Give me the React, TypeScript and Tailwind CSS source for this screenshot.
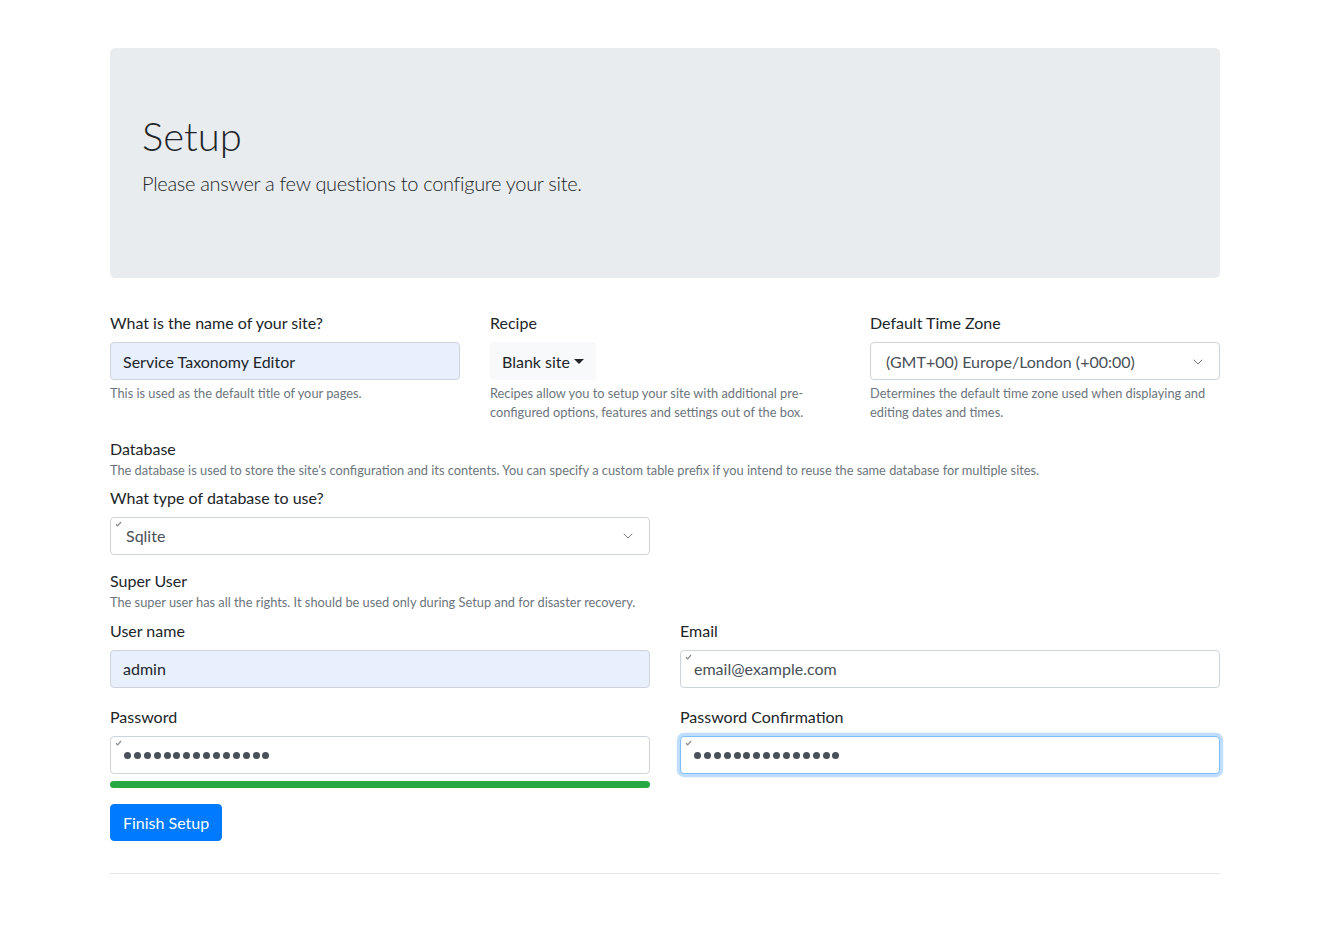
import { ChevronDown } from 'lucide-react';

const font = "font-['Lato','Liberation_Sans',sans-serif]";

function Tick() {
  return (
    <svg
      className="absolute left-[4px] top-[3px]"
      width="7"
      height="6"
      viewBox="0 0 7 6"
      fill="none"
    >
      <path d="M1 3.2 L2.7 4.8 L6 1" stroke="#8a8a8a" strokeWidth="1.2" />
    </svg>
  );
}

function Dots() {
  return (
    <div className="flex items-center gap-[2.9px] pt-[1px]">
      {Array.from({ length: 15 }).map((_, i) => (
        <span key={i} className="block w-[7px] h-[7px] rounded-full bg-[#495057]" />
      ))}
    </div>
  );
}

function Label({ children }: { children: React.ReactNode }) {
  return <div className="text-base leading-6 pt-[1px] mb-[7px]">{children}</div>;
}

function Help({ children }: { children: React.ReactNode }) {
  return <div className="text-[12.8px] leading-[19.2px] text-[#6c757d] mt-1">{children}</div>;
}

export default function App() {
  return (
    <div className={`min-h-screen bg-white text-[#212529] ${font}`}>
      <div className="w-[1110px] mx-auto pt-12">
        {/* Jumbotron */}
        <div className="bg-[#e9ecef] rounded-[5px] px-8 py-16 mb-8">
          <h1 className="text-[40px] leading-[48px] font-light mb-2">Setup</h1>
          <p className="text-[20px] leading-[30px] font-light tracking-[-0.3px] mb-4">
            Please answer a few questions to configure your site.
          </p>
        </div>

        {/* Site / recipe / timezone */}
        <div className="grid grid-cols-3 gap-[30px]">
          <div className="mb-4">
            <Label>What is the name of your site?</Label>
            <div className="h-[38px] border border-[#ced4da] rounded-[4px] bg-[#e8f0fe] px-3 pt-[1px] flex items-center text-base text-[#212529]">
              Service Taxonomy Editor
            </div>
            <Help>This is used as the default title of your pages.</Help>
          </div>
          <div className="mb-4">
            <Label>Recipe</Label>
            <div className="inline-flex items-center h-[38px] px-3 pt-[1px] rounded-[4px] bg-[#f8f9fa] text-base">
              Blank site
              <span className="ml-[4px] w-0 h-0 border-x-[5px] border-x-transparent border-t-[5px] border-t-[#212529]" />
            </div>
            <Help>
              Recipes allow you to setup your site with additional pre-
              <br />
              configured options, features and settings out of the box.
            </Help>
          </div>
          <div className="mb-4">
            <Label>Default Time Zone</Label>
            <div className="h-[38px] border border-[#ced4da] rounded-[4px] bg-white pl-[15px] pr-[13px] pt-[1px] flex items-center justify-between text-base text-[#495057]">
              <span>(GMT+00) Europe/London (+00:00)</span>
              <ChevronDown size={16} strokeWidth={1.2} className="text-[#555]" />
            </div>
            <Help>
              Determines the default time zone used when displaying and
              <br />
              editing dates and times.
            </Help>
          </div>
        </div>

        {/* Database */}
        <div className="mt-[-1px]">
          <div className="text-base leading-6">Database</div>
          <div className="text-[12.8px] leading-[19.2px] text-[#6c757d] mb-[4px]">
            The database is used to store the site's configuration and its contents. You can specify a custom table prefix if you intend to reuse the same database for multiple sites.
          </div>
          <div className="grid grid-cols-2 gap-[30px]">
            <div className="mb-[14px]">
              <Label>What type of database to use?</Label>
              <div className="relative h-[38px] border border-[#ced4da] rounded-[4px] bg-white pl-[15px] pr-[13px] pt-[1px] flex items-center justify-between text-base text-[#495057]">
                <Tick />
                <span>Sqlite</span>
                <ChevronDown size={16} strokeWidth={1.2} className="text-[#555]" />
              </div>
            </div>
          </div>
        </div>

        {/* Super user */}
        <div>
          <div className="text-base leading-6">Super User</div>
          <div className="text-[12.8px] leading-[19.2px] text-[#6c757d] mb-[6px]">
            The super user has all the rights. It should be used only during Setup and for disaster recovery.
          </div>
          <div className="grid grid-cols-2 gap-x-[30px]">
            <div className="mb-4">
              <Label>User name</Label>
              <div className="h-[38px] border border-[#ced4da] rounded-[4px] bg-[#e8f0fe] px-3 pt-[1px] flex items-center text-base text-[#212529]">
                admin
              </div>
            </div>
            <div className="mb-4">
              <Label>Email</Label>
              <div className="relative h-[38px] border border-[#ced4da] rounded-[4px] bg-white pl-[13px] pr-3 pt-[1px] flex items-center text-base text-[#495057]">
                <Tick />
                email@example.com
              </div>
            </div>
            <div>
              <Label>Password</Label>
              <div className="relative h-[38px] border border-[#ced4da] rounded-[4px] bg-white pl-[13px] pr-3 flex items-center">
                <Tick />
                <Dots />
              </div>
              <div className="mt-[7px] h-[7px] rounded-full bg-[#28a745]" />
            </div>
            <div>
              <Label>Password Confirmation</Label>
              <div className="relative h-[38px] border border-[#80bdff] rounded-[4px] bg-white pl-[13px] pr-3 flex items-center shadow-[0_0_0_3.2px_rgba(0,123,255,0.25)]">
                <Tick />
                <Dots />
              </div>
            </div>
          </div>
        </div>

        <button className="mt-4 h-[37px] px-3 pt-[1px] rounded-[4px] bg-[#007bff] text-white text-base border border-[#007bff]">
          Finish Setup
        </button>

        <hr className="mt-[32px] border-0 border-t border-[rgba(0,0,0,0.1)]" />
      </div>
    </div>
  );
}
